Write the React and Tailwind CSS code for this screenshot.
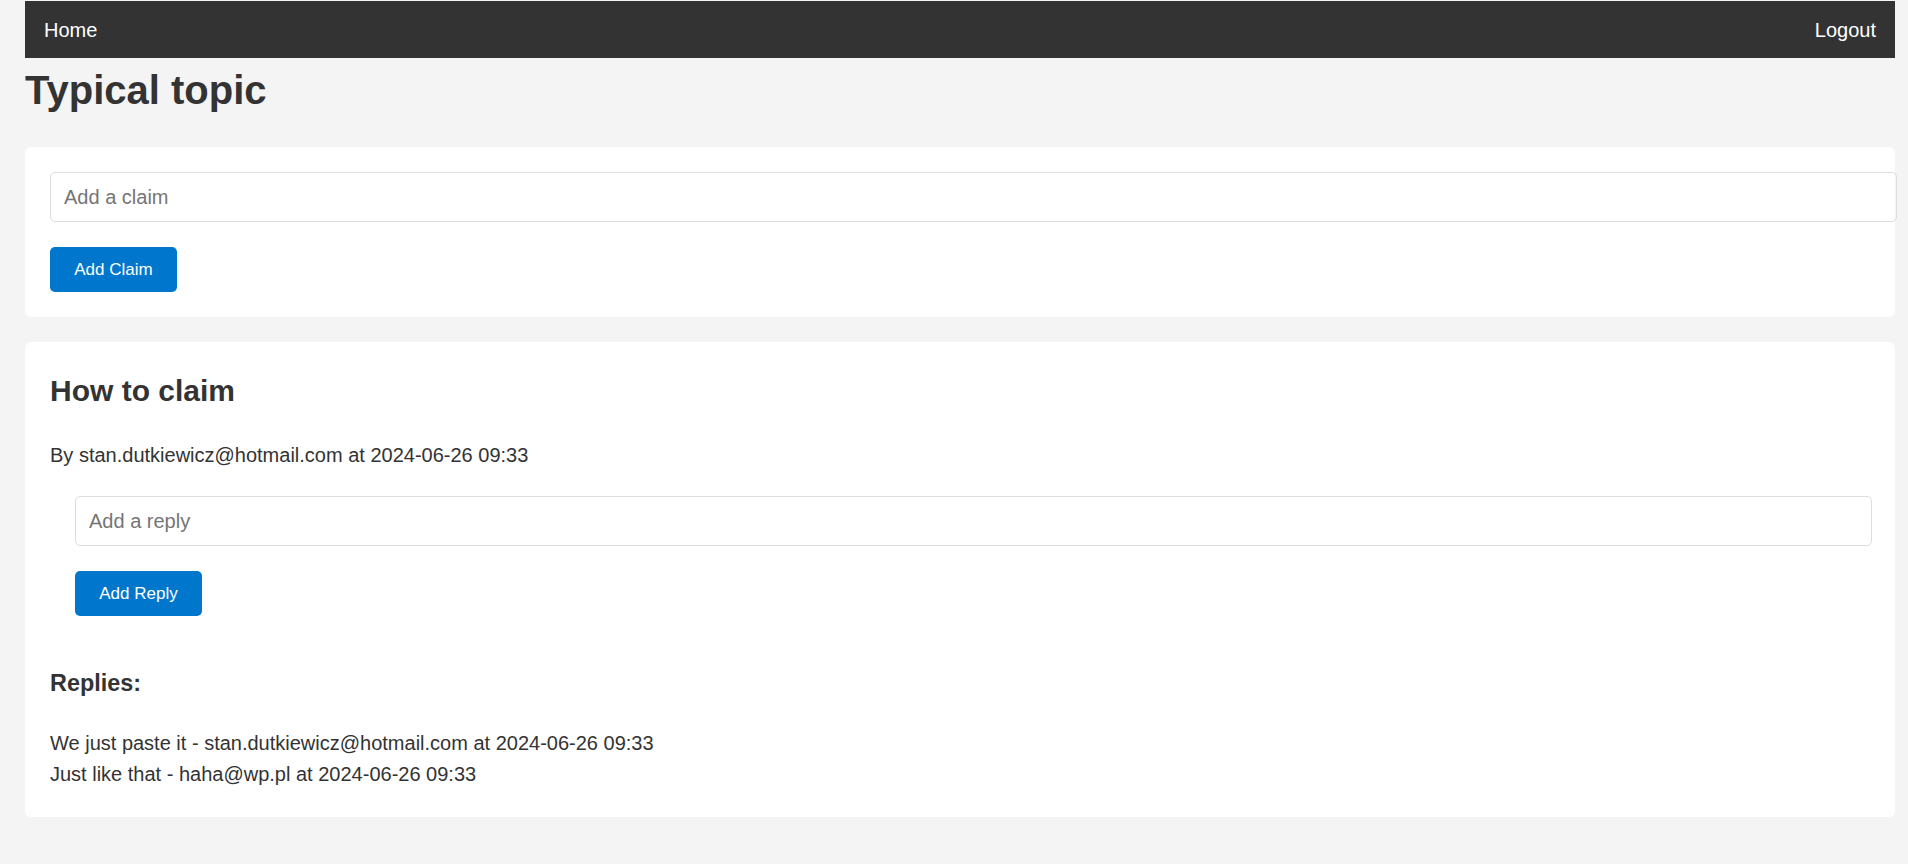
import { useState } from "react";

const replies = [
  { text: "We just paste it", author: "stan.dutkiewicz@hotmail.com", at: "2024-06-26 09:33" },
  { text: "Just like that", author: "haha@wp.pl", at: "2024-06-26 09:33" },
];

export default function App() {
  const [claim, setClaim] = useState("");
  const [reply, setReply] = useState("");

  return (
    <div className="min-h-screen bg-[#f4f4f4] pl-[25px] pr-[13px] pt-px pb-[25px] font-['Liberation_Sans',Arial,sans-serif] text-[#333]">
      <nav className="flex h-[57px] items-center justify-between bg-[#333] px-[19px] text-[20px] text-white">
        <a href="#">Home</a>
        <a href="#">Logout</a>
      </nav>

      <h1 className="mt-[9px] mb-[34px] text-[40px] font-bold leading-[46px]">Typical topic</h1>

      <div className="rounded-[6px] bg-white p-[25px]">
        <input
          className="block h-[50px] w-[calc(100%+27px)] rounded-[5px] border border-[#ddd] px-[13px] text-[20px] outline-none placeholder:text-[#757575]"
          placeholder="Add a claim"
          value={claim}
          onChange={(e) => setClaim(e.target.value)}
        />
        <button className="mt-[25px] block h-[45px] w-[127px] rounded-[5px] bg-[#0077cc] text-[17px] text-white">
          Add Claim
        </button>
      </div>

      <div className="mt-[25px] rounded-[6px] bg-white px-[25px] pt-[25px] pb-[27px]">
        <h2 className="mt-[6px] text-[30px] font-bold leading-[35px]">How to claim</h2>
        <p className="mt-[36px] text-[20px] leading-[23px]">
          By stan.dutkiewicz@hotmail.com at 2024-06-26 09:33
        </p>

        <div className="mx-[25px] mt-[29px]">
          <input
            className="block h-[50px] w-[calc(100%+27px)] rounded-[5px] border border-[#ddd] px-[13px] text-[20px] outline-none placeholder:text-[#757575]"
            placeholder="Add a reply"
            value={reply}
            onChange={(e) => setReply(e.target.value)}
          />
          <button className="mt-[25px] block h-[45px] w-[127px] rounded-[5px] bg-[#0077cc] text-[17px] text-white">
            Add Reply
          </button>
        </div>

        <h3 className="mt-[54px] text-[23.4px] font-bold leading-[27px]">Replies:</h3>
        <div className="mt-[31px] text-[20px] leading-[31px]">
          {replies.map((r) => (
            <div key={r.text}>
              {r.text} - {r.author} at {r.at}
            </div>
          ))}
        </div>
      </div>
    </div>
  );
}
